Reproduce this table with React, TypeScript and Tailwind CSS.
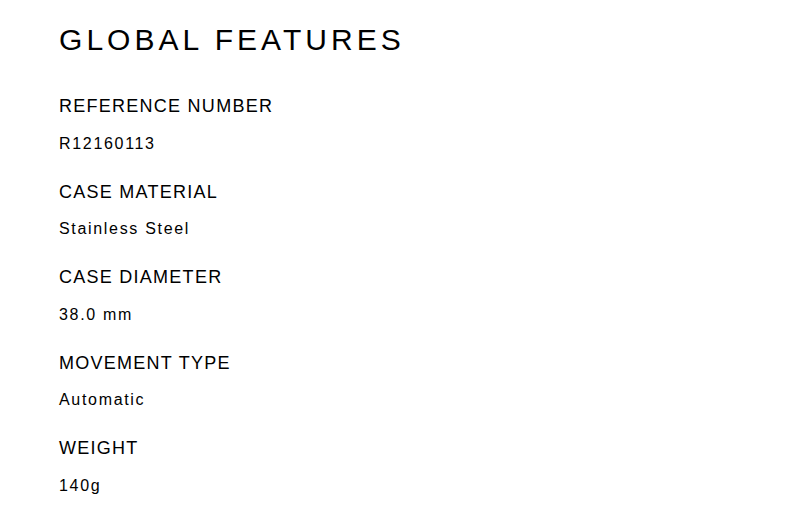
const features = [
  { label: "REFERENCE NUMBER", value: "R12160113" },
  { label: "CASE MATERIAL", value: "Stainless Steel" },
  { label: "CASE DIAMETER", value: "38.0 mm" },
  { label: "MOVEMENT TYPE", value: "Automatic" },
  { label: "WEIGHT", value: "140g" },
];

export default function App() {
  return (
    <div className="min-h-screen w-full bg-white text-black pl-[59px] pt-[22px] font-['Liberation_Sans',Arial,sans-serif]">
      <h1 className="text-[30px] leading-[36px] tracking-[0.135em]">GLOBAL FEATURES</h1>
      <dl className="mt-[36px] flex flex-col gap-[24px]">
        {features.map((f) => (
          <div key={f.label} className="flex flex-col gap-[13.5px]">
            <dt className="text-[18px] leading-[24px] tracking-[0.07em]">{f.label}</dt>
            <dd className="text-[16px] leading-[24px] tracking-[0.105em]">{f.value}</dd>
          </div>
        ))}
      </dl>
    </div>
  );
}
